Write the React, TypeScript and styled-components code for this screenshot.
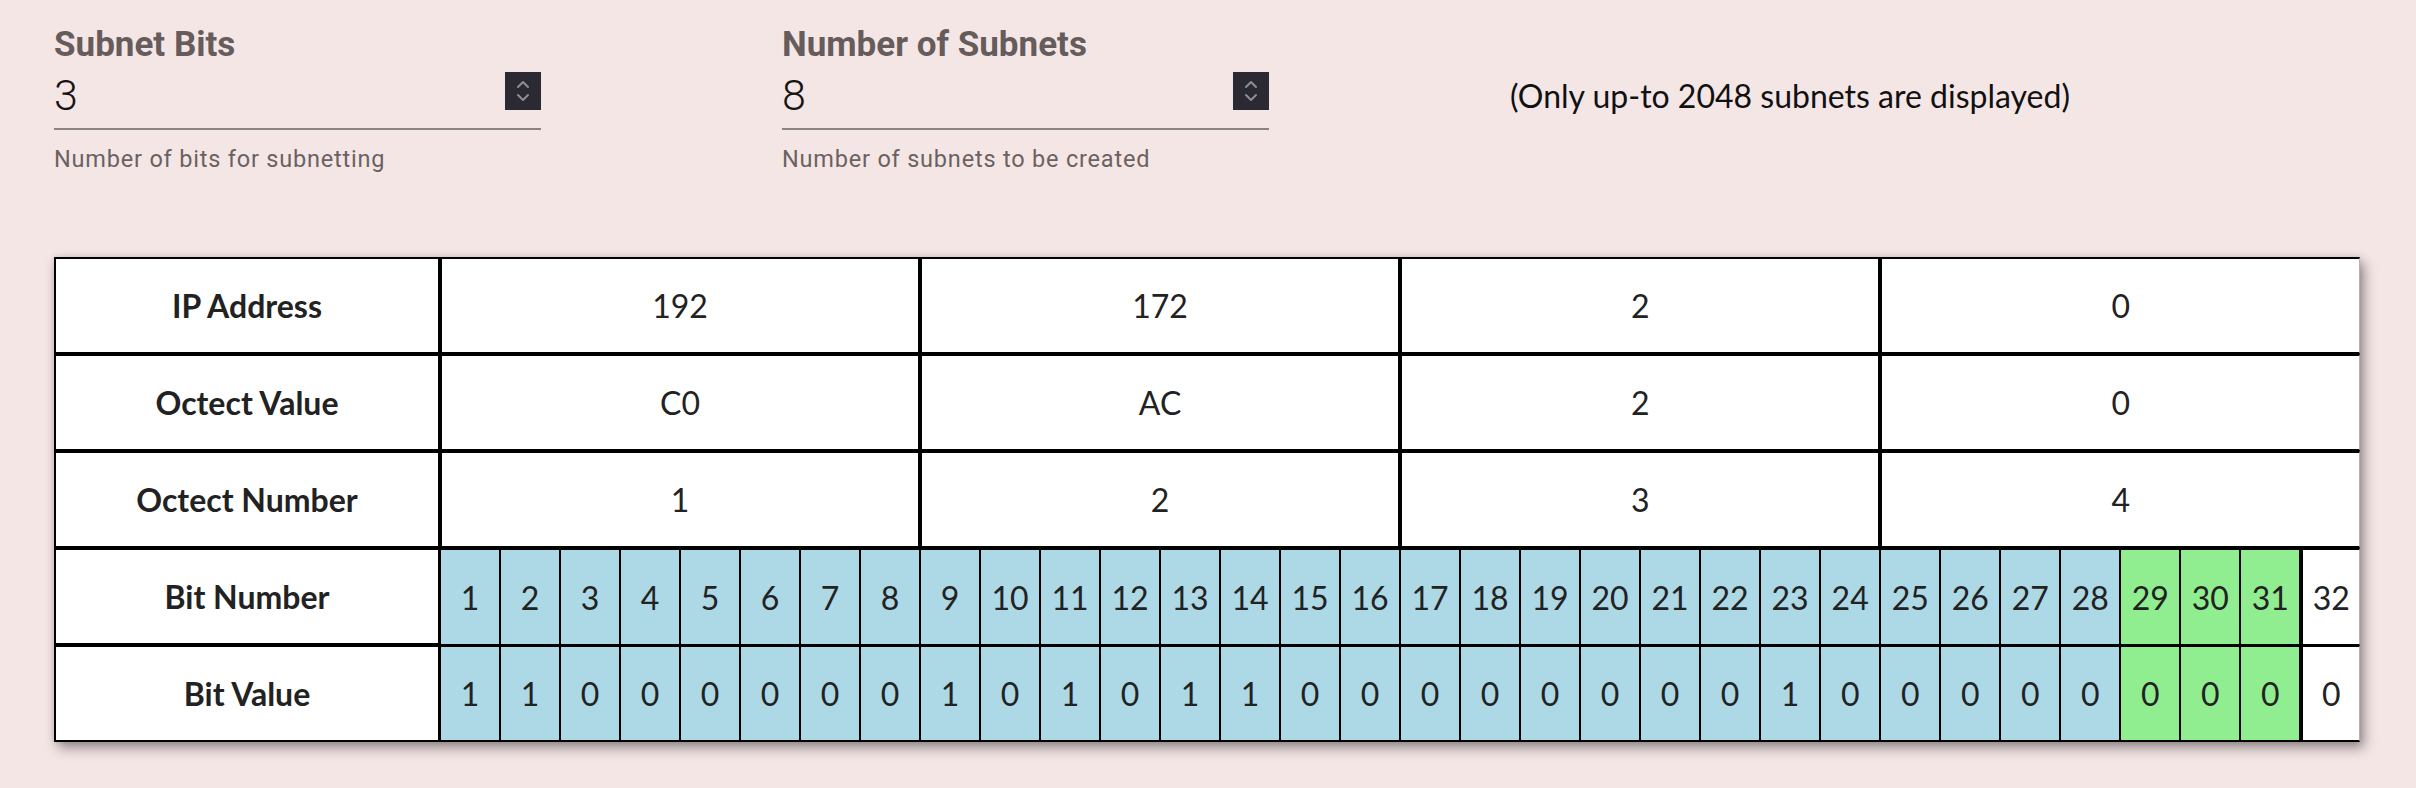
import React from "react";
import styled, { createGlobalStyle } from "styled-components";

const GlobalStyle = createGlobalStyle`
  html, body {
    margin: 0;
    padding: 0;
    background: #f5e6e6;
  }
  * { box-sizing: border-box; }
`;

const Page = styled.div`
  padding: 24px 56px 40px 54px;
  background: #f5e6e6;
  min-height: 788px;
`;

const FormRow = styled.div`
  display: flex;
  align-items: flex-start;
  gap: 241px;
`;

const Field = styled.div`
  width: 487px;
  display: flex;
  flex-direction: column;
`;

const Label = styled.label`
  font-family: Roboto, "Liberation Sans", sans-serif;
  font-weight: 700;
  font-size: 35px;
  line-height: 42px;
  color: #665c5c;
`;

const InputRow = styled.div`
  display: flex;
  align-items: center;
  height: 64px;
  padding-bottom: 10px;
  border-bottom: 2px solid #8c8383;
`;

const ValueInput = styled.input`
  flex: 1;
  min-width: 0;
  border: none;
  outline: none;
  background: transparent;
  padding: 0;
  margin-top: 6px;
  font-family: Roboto, "Liberation Sans", sans-serif;
  font-weight: 300;
  font-size: 43px;
  line-height: 54px;
  color: #151515;
`;

const Spinner = styled.div`
  width: 36px;
  height: 38px;
  background: #2b2a33;
  display: flex;
  align-items: center;
  justify-content: center;
  margin-bottom: 2px;
`;

const Helper = styled.p`
  margin: 15px 0 0;
  font-family: Roboto, "Liberation Sans", sans-serif;
  font-size: 23.5px;
  line-height: 28px;
  letter-spacing: 0.8px;
  color: #6b6161;
`;

const Note = styled.p`
  margin: 53px 0 0;
  font-family: Lato, "Open Sans", sans-serif;
  font-size: 32px;
  line-height: 38px;
  color: #111;
  white-space: nowrap;
`;

const Table = styled.table`
  margin-top: 84px;
  width: 2306px;
  table-layout: fixed;
  border-collapse: separate;
  border-spacing: 0;
  background: #fff;
  box-shadow: 4px 6px 12px rgba(0, 0, 0, 0.4), 0 0 6px rgba(0, 0, 0, 0.12);
  font-family: Lato, "Open Sans", sans-serif;
  font-size: 32px;
  color: #222;
`;

const Row = styled.tr`
  height: 97px;
`;

const HeadCell = styled.th`
  border: 2px solid #000;
  font-weight: 700;
  text-align: center;
  padding: 0;
`;

const OctetCell = styled.td`
  border: 2px solid #000;
  font-weight: 400;
  text-align: center;
  padding: 0;
  &:last-child {
    border-right: 1px solid #bdb0b0;
  }
`;

type BitKind = "net" | "sub" | "host";

const BitCell = styled.td<{ $kind: BitKind; $last: boolean }>`
  border-style: solid;
  border-color: #000;
  border-width: 2px 1px ${(p) => (p.$last ? "2px" : "1px")} 1px;
  background: ${(p) =>
    p.$kind === "net" ? "#add8e6" : p.$kind === "sub" ? "#90ee90" : "#ffffff"};
  text-align: center;
  padding: 0;
  font-weight: 400;
  ${(p) =>
    p.$kind === "host"
      ? "border-left-width: 3px; border-right: 1px solid #bdb0b0;"
      : ""}
`;

const SpinIcon = () => (
  <svg width="16" height="28" viewBox="0 0 16 28" fill="none">
    <path d="M3 10 L8 5 L13 10" stroke="#8e8c99" strokeWidth="2" strokeLinecap="round" strokeLinejoin="round" />
    <path d="M3 18 L8 23 L13 18" stroke="#8e8c99" strokeWidth="2" strokeLinecap="round" strokeLinejoin="round" />
  </svg>
);

const NumberField = ({ label, value, helper }: { label: string; value: string; helper: string }) => (
  <Field>
    <Label>{label}</Label>
    <InputRow>
      <ValueInput type="text" readOnly value={value} />
      <Spinner>
        <SpinIcon />
      </Spinner>
    </InputRow>
    <Helper>{helper}</Helper>
  </Field>
);

const octets = [192, 172, 2, 0];
const bits = octets
  .map((o) => o.toString(2).padStart(8, "0"))
  .join("")
  .split("");
const networkBits = 28;
const subnetBits = 3;

const kindOf = (i: number): BitKind =>
  i < networkBits ? "net" : i < networkBits + subnetBits ? "sub" : "host";

export default function App() {
  return (
    <>
      <GlobalStyle />
      <Page>
        <FormRow>
          <NumberField label="Subnet Bits" value="3" helper="Number of bits for subnetting" />
          <NumberField label="Number of Subnets" value="8" helper="Number of subnets to be created" />
          <Note>(Only up-to 2048 subnets are displayed)</Note>
        </FormRow>
        <Table>
          <colgroup>
            <col style={{ width: 386 }} />
            {bits.map((_, i) => (
              <col key={i} style={{ width: 60 }} />
            ))}
          </colgroup>
          <tbody>
            <Row>
              <HeadCell>IP Address</HeadCell>
              {octets.map((o, i) => (
                <OctetCell key={i} colSpan={8}>{o}</OctetCell>
              ))}
            </Row>
            <Row>
              <HeadCell>Octect Value</HeadCell>
              {octets.map((o, i) => (
                <OctetCell key={i} colSpan={8}>{o.toString(16).toUpperCase()}</OctetCell>
              ))}
            </Row>
            <Row>
              <HeadCell>Octect Number</HeadCell>
              {octets.map((_, i) => (
                <OctetCell key={i} colSpan={8}>{i + 1}</OctetCell>
              ))}
            </Row>
            <Row>
              <HeadCell>Bit Number</HeadCell>
              {bits.map((_, i) => (
                <BitCell key={i} $kind={kindOf(i)} $last={false}>{i + 1}</BitCell>
              ))}
            </Row>
            <Row>
              <HeadCell>Bit Value</HeadCell>
              {bits.map((b, i) => (
                <BitCell key={i} $kind={kindOf(i)} $last={true}>{b}</BitCell>
              ))}
            </Row>
          </tbody>
        </Table>
      </Page>
    </>
  );
}
